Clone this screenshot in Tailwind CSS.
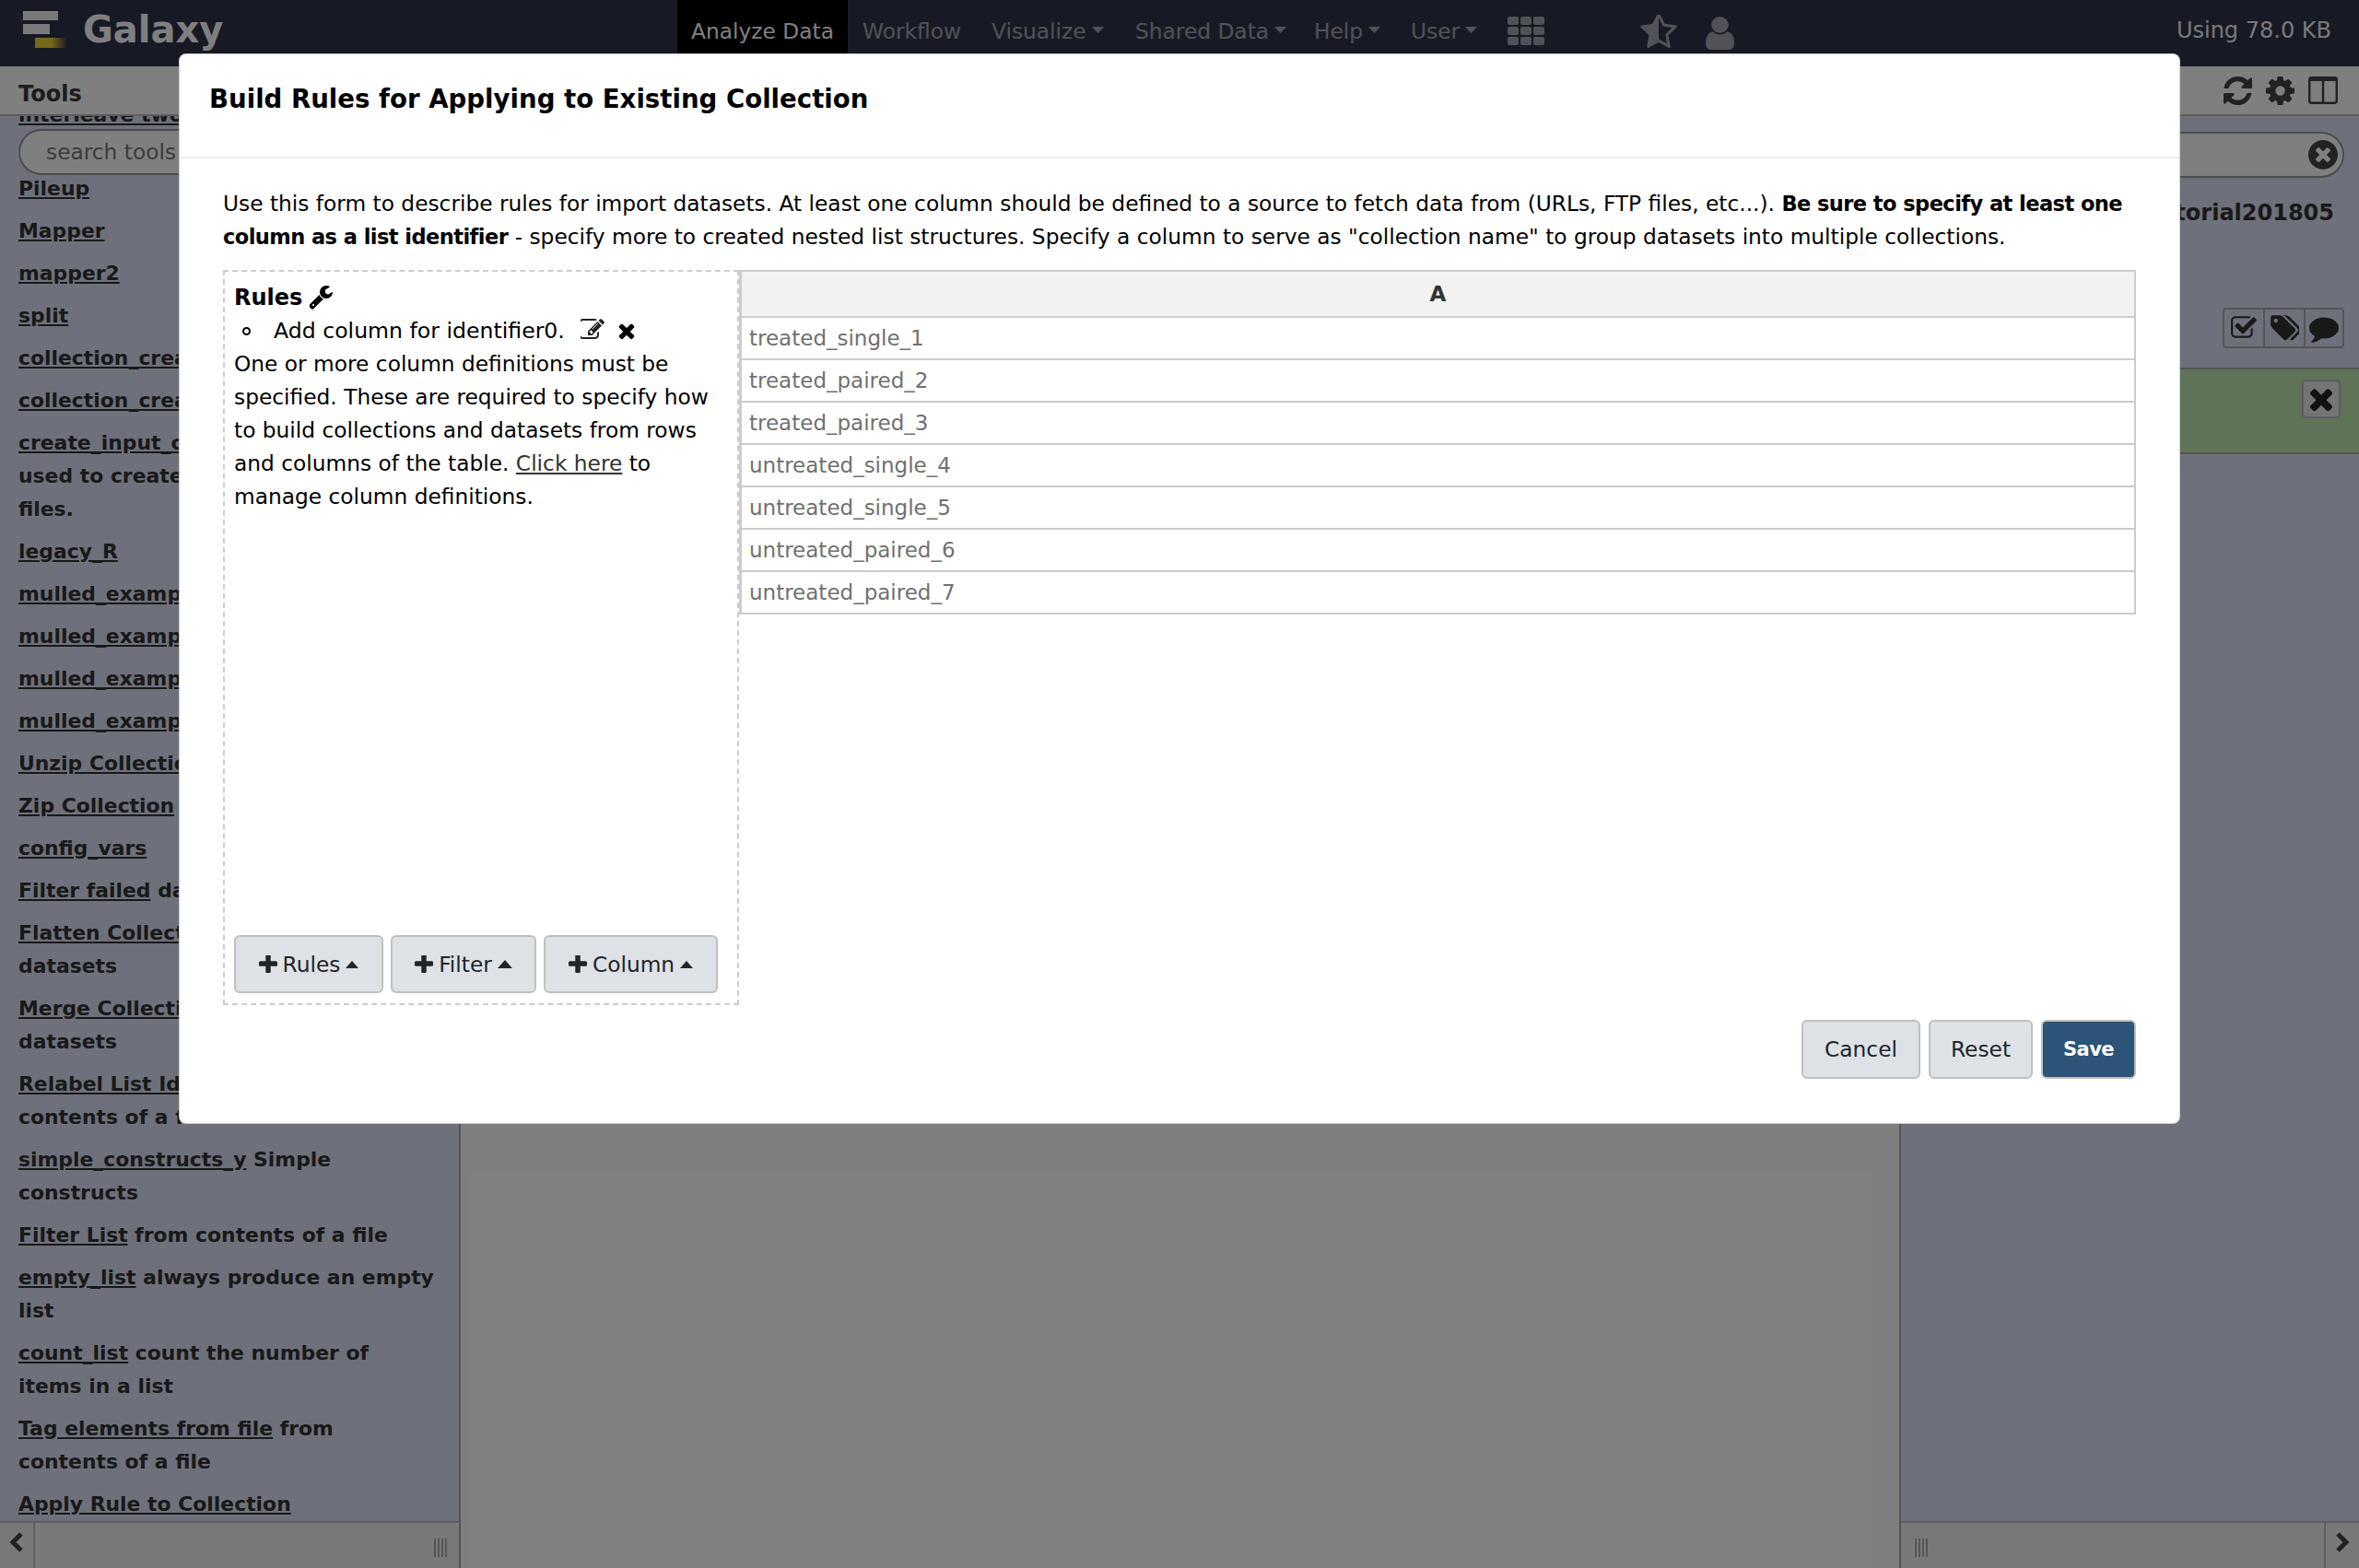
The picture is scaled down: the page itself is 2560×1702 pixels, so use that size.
<!DOCTYPE html>
<html>
<head>
<meta charset="utf-8">
<script src="https://cdn.jsdelivr.net/npm/@tailwindcss/browser@4"></script>
<title>Galaxy</title>
</head>
<body class="m-0 bg-white">
<div class="relative w-[2560px] h-[1702px] overflow-hidden flex flex-col font-['DejaVu_Sans',sans-serif] text-[23.3px] leading-[36px] text-[#2c3143] bg-white">

  <!-- Masthead -->
  <header class="h-[72px] shrink-0 bg-[#2e3448] flex items-start text-white/55">
    <div class="w-[735px] h-[64px] flex items-center pl-[25px] gap-[17px]">
      <div class="w-[48px] h-[40px] flex flex-col gap-[4px]">
        <div class="w-[38px] h-[10px] bg-white/95 blur-[0.7px]"></div>
        <div class="w-[29px] h-[11px] bg-white/95 blur-[0.7px]"></div>
        <div class="ml-[13px] w-[35px] h-[11px] bg-gradient-to-r from-[#f0d030] via-[#f0d030] to-transparent blur-[0.7px]"></div>
      </div>
      <span class="text-[40px] font-bold text-white leading-[64px]">Galaxy</span>
    </div>
    <nav class="flex h-[72px] items-start">
      <a class="w-[185px] h-[72px] bg-[#000] text-white pt-[16px] text-center leading-[36px]">Analyze Data</a>
      <a class="ml-[16px] w-[124px] pt-[16px]">Workflow</a>
      <a class="ml-[16px] w-[140px] pt-[16px] flex gap-[6px] items-start">Visualize<svg class="mt-[13px]" width="13" height="7"><polygon points="0,0 13,0 6.5,7" fill="currentColor"/></svg></a>
      <a class="ml-[16px] w-[178px] pt-[16px] flex gap-[6px] items-start">Shared Data<svg class="mt-[13px]" width="13" height="7"><polygon points="0,0 13,0 6.5,7" fill="currentColor"/></svg></a>
      <a class="ml-[16px] w-[89px] pt-[16px] flex gap-[6px] items-start">Help<svg class="mt-[13px]" width="13" height="7"><polygon points="0,0 13,0 6.5,7" fill="currentColor"/></svg></a>
      <a class="ml-[16px] w-[89px] pt-[16px] flex gap-[6px] items-start">User<svg class="mt-[13px]" width="13" height="7"><polygon points="0,0 13,0 6.5,7" fill="currentColor"/></svg></a>
      <div class="ml-[16px] mt-[18px] grid grid-cols-3 gap-[2px]">
        <i class="block w-[12px] h-[9px] rounded-[2px] bg-current"></i><i class="block w-[12px] h-[9px] rounded-[2px] bg-current"></i><i class="block w-[12px] h-[9px] rounded-[2px] bg-current"></i>
        <i class="block w-[12px] h-[9px] rounded-[2px] bg-current"></i><i class="block w-[12px] h-[9px] rounded-[2px] bg-current"></i><i class="block w-[12px] h-[9px] rounded-[2px] bg-current"></i>
        <i class="block w-[12px] h-[9px] rounded-[2px] bg-current"></i><i class="block w-[12px] h-[9px] rounded-[2px] bg-current"></i><i class="block w-[12px] h-[9px] rounded-[2px] bg-current"></i>
      </div>
      <svg class="ml-[104px] mt-[16px]" width="40" height="37" viewBox="64 128 1664 1536" preserveAspectRatio="none" fill="currentColor"><path d="M1250 957l257-250-356-52-66-10-30-60-159-322v963l59 31 318 168-60-355-12-66zm452-262l-363 354 86 500q5 33-6 51.5t-34 18.5q-17 0-40-12l-449-236-449 236q-23 12-40 12-23 0-34-18.5t-6-51.5l86-500-364-354q-32-32-23-59.5t54-34.5l502-73 225-455q20-41 49-41 28 0 49 41l225 455 502 73q45 7 54 34.5t-24 59.5z"/></svg>
      <svg class="ml-[31px] mt-[18px]" width="31" height="36" viewBox="256 128 1280 1536" preserveAspectRatio="none" fill="currentColor"><path d="M1536 1399q0 109-62.5 187t-150.5 78h-854q-88 0-150.5-78t-62.5-187q0-85 8.5-160.5t31.5-152 58.5-131 94-89 134.5-34.5q131 128 313 128t313-128q76 0 134.5 34.5t94 89 58.5 131 31.5 152 8.5 160.5zm-256-887q0 159-112.5 271.5t-271.5 112.5-271.5-112.5-112.5-271.5 112.5-271.5 271.5-112.5 271.5 112.5 112.5 271.5z"/></svg>
    </nav>
    <div class="ml-auto pr-[30px] pt-[15px] whitespace-nowrap text-[24px] text-white/95">Using 78.0 KB</div>
  </header>

  <!-- Panels -->
  <main class="flex-1 flex min-h-0 isolate">
    <!-- Tools -->
    <aside class="relative w-[500px] shrink-0 flex flex-col bg-[#dce2f6] border-r-[2px] border-[#aaa]">
      <div class="h-[54px] shrink-0 bg-[#ffffff] border-b-[2px] border-[#bbb] pl-[20px] pt-[12px] z-10 text-[#3a3a3a] font-bold text-[24px]">Tools</div>
      <div class="absolute left-[20px] top-[68px] w-[460px] h-[50px] rounded-full border-[2px] border-[#999] bg-white pl-[28px] leading-[46px] text-[#777] z-10">search tools</div>
      <div class="flex-1 overflow-hidden pl-[20px] flex flex-col gap-[10px] text-[#333] font-bold text-[21.9px]">
        <div class="h-[16px] -mt-[9px] leading-[16px] underline">interleave two</div>
        <div class="mt-[44px] underline">Pileup</div>
        <div class="underline">Mapper</div>
        <div class="underline">mapper2</div>
        <div class="underline">split</div>
        <div class="underline">collection_create</div>
        <div class="underline">collection_create</div>
        <div><span class="underline">create_input_collection</span><br>used to create a list of<br>files.</div>
        <div class="underline">legacy_R</div>
        <div class="underline">mulled_example</div>
        <div class="underline">mulled_example</div>
        <div class="underline">mulled_example</div>
        <div class="underline">mulled_example</div>
        <div class="underline">Unzip Collection</div>
        <div class="underline">Zip Collection</div>
        <div class="underline">config_vars</div>
        <div><span class="underline">Filter failed</span> datasets</div>
        <div><span class="underline">Flatten Collection</span><br>datasets</div>
        <div><span class="underline">Merge Collections</span><br>datasets</div>
        <div><span class="underline">Relabel List Identifiers</span><br>contents of a file</div>
        <div><span class="underline">simple_constructs_y</span> Simple<br>constructs</div>
        <div><span class="underline">Filter List</span> from contents of a file</div>
        <div><span class="underline">empty_list</span> always produce an empty<br>list</div>
        <div><span class="underline">count_list</span> count the number of<br>items in a list</div>
        <div><span class="underline">Tag elements from file</span> from<br>contents of a file</div>
        <div class="underline">Apply Rule to Collection</div>
      </div>
      <div class="h-[51px] shrink-0 bg-[#f2f2f2] border-t-[2px] border-[#bbb] flex z-10">
        <div class="w-[38px] border-r-[2px] border-[#bbb] flex items-start justify-center pt-[9px]">
          <svg width="16" height="24" viewBox="0 0 16 24" fill="none" stroke="#444" stroke-width="5"><path d="M13 3 L4 12 L13 21"/></svg>
        </div>
        <div class="ml-auto mr-[11px] mt-[17px] w-[16px] h-[20px] bg-[repeating-linear-gradient(90deg,#aaa_0,#aaa_2px,transparent_2px,transparent_4px)]"></div>
      </div>
    </aside>

    <!-- Center -->
    <section class="flex-1 bg-white"></section>

    <!-- History -->
    <aside class="relative w-[499px] shrink-0 flex flex-col bg-[#dce2f6] border-l-[2px] border-[#aaa]">
      <div class="h-[54px] shrink-0 bg-[#ffffff] border-b-[2px] border-[#bbb] flex justify-end items-center gap-[15px] pr-[23px] text-[#444]">
        <svg width="31" height="31" viewBox="128 128 1536 1536" fill="currentColor"><path d="M1639 1056q0 5-1 7-64 268-268 434.5t-478 166.5q-146 0-282.5-55t-243.5-157l-129 129q-19 19-45 19t-45-19-19-45v-448q0-26 19-45t45-19h448q26 0 45 19t19 45-19 45l-137 137q71 66 161 102t187 36q134 0 250-65t186-179q11-17 53-117 8-23 30-23h192q13 0 22.5 9.5t9.5 22.5zm25-800v448q0 26-19 45t-45 19h-448q-26 0-45-19t-19-45 19-45l138-138q-148-137-349-137-134 0-250 65t-186 179q-11 17-53 117-8 23-30 23h-199q-13 0-22.5-9.5t-9.5-22.5v-7q65-268 270-434.5t480-166.5q146 0 284 55.5t245 156.5l130-129q19-19 45-19t45 19 19 45z"/></svg>
        <svg width="31" height="31" viewBox="128 128 1536 1536" fill="currentColor"><path d="M1152 896q0-106-75-181t-181-75-181 75-75 181 75 181 181 75 181-75 75-181zm512-109v222q0 12-8 23t-20 13l-185 28q-19 54-39 91 35 50 107 138 10 12 10 25t-9 23q-27 37-99 108t-94 71q-12 0-26-9l-138-108q-44 23-91 38-16 136-29 186-7 28-36 28h-222q-14 0-24.5-8.5t-11.5-21.5l-28-184q-49-16-90-37l-141 107q-10 9-25 9-14 0-25-11-126-114-165-168-7-10-7-23 0-12 8-23 15-21 51-66.5t54-70.5q-27-50-41-99l-183-27q-13-2-21-12.5t-8-23.5v-222q0-12 8-23t19-13l186-28q14-46 39-92-40-57-107-138-10-12-10-24 0-10 9-23 26-36 98.5-107.5t94.5-71.5q13 0 26 10l138 107q44-23 91-38 16-136 29-186 7-28 36-28h222q14 0 24.5 8.5t11.5 21.5l28 184q49 16 90 37l142-107q9-9 24-9 13 0 25 10 129 119 165 170 7 8 7 22 0 12-8 23-15 21-51 66.5t-54 70.5q26 50 41 98l183 28q13 2 21 12.5t8 23.5z"/></svg>
        <svg width="32" height="30" viewBox="64 128 1664 1536" preserveAspectRatio="none" fill="currentColor"><path d="M224 1536h608v-1152h-640v1120q0 13 9.5 22.5t22.5 9.5zm1376-32v-1120h-640v1152h608q13 0 22.5-9.5t9.5-22.5zm128-1216v1216q0 66-47 113t-113 47h-1344q-66 0-113-47t-47-113v-1216q0-66 47-113t113-47h1344q66 0 113 47t47 113z"/></svg>
      </div>
      <div class="flex-1 min-h-0 flex flex-col">
        <div class="mt-[17px] mr-[16px] ml-[10px] h-[50px] rounded-full border-[2px] border-[#999] bg-white flex items-center justify-end pr-[5px]">
          <svg width="32" height="32" viewBox="128 128 1536 1536" fill="#444"><path d="M1277 1122q0-26-19-45l-181-181 181-181q19-19 19-45 0-27-19-46l-90-90q-19-19-46-19-26 0-45 19l-181 181-181-181q-19-19-45-19-27 0-46 19l-90 90q-19 19-19 46 0 26 19 45l181 181-181 181q-19 19-19 45 0 27 19 46l90 90q19 19 46 19 26 0 45-19l181-181 181 181q19 19 45 19 27 0 46-19l90-90q19-19 19-46zm387-226q0 209-103 385.5t-279.5 279.5-385.5 103-385.5-103-279.5-279.5-103-385.5 103-385.5 279.5-279.5 385.5-103 385.5 103 279.5 279.5 103 385.5z"/></svg>
        </div>
        <div class="mt-[20px] pr-[27px] text-right text-[#333] whitespace-nowrap text-[24px] font-bold">tutorial201805</div>
        <div class="mt-[85px] mr-[16px] self-end flex h-[44px] rounded-[4px] border-[2px] border-[#aaa] text-[#333]">
          <div class="w-[44px] flex items-center justify-center border-r-[2px] border-[#aaa]"><svg width="30" height="30" viewBox="0 0 1792 1792" fill="currentColor"><path d="M1472 930v318q0 119-84.5 203.5t-203.5 84.5h-832q-119 0-203.5-84.5t-84.5-203.5v-832q0-119 84.5-203.5t203.5-84.5h832q63 0 117 25 15 7 18 23 3 17-9 29l-49 49q-10 10-23 10-3 0-9-2-23-6-45-6h-832q-66 0-113 47t-47 113v832q0 66 47 113t113 47h832q66 0 113-47t47-113v-254q0-13 9-22l64-64q10-10 23-10 6 0 12 3 20 8 20 29zm231-489l-814 814q-24 24-57 24t-57-24l-430-430q-24-24-24-57t24-57l110-110q24-24 57-24t57 24l263 263 647-647q24-24 57-24t57 24l110 110q24 24 24 57t-24 57z"/></svg></div>
          <div class="w-[44px] flex items-center justify-center border-r-[2px] border-[#aaa]"><svg width="32" height="32" viewBox="0 0 1792 1792" fill="currentColor"><path d="M512 448q0-53-37.5-90.5t-90.5-37.5-90.5 37.5-37.5 90.5 37.5 90.5 90.5 37.5 90.5-37.5 37.5-90.5zm1067 576q0 53-37 90l-491 492q-39 37-91 37-53 0-90-37l-715-716q-38-37-64.5-101t-26.5-117v-416q0-52 38-90t90-38h416q53 0 117 26.5t102 64.5l715 714q37 39 37 91zm384 0q0 53-37 90l-491 492q-39 37-91 37-36 0-59-14t-53-45l470-470q37-37 37-90 0-52-37-91l-715-714q-38-38-102-64.5t-117-26.5h224q53 0 117 26.5t102 64.5l715 714q37 39 37 91z"/></svg></div>
          <div class="w-[40px] flex items-center justify-center"><svg width="32" height="32" viewBox="0 0 1792 1792" fill="currentColor"><path d="M1792 896q0 174-120 321.5t-326 233-450 85.5q-70 0-145-8-198 175-460 242-49 14-114 22-17 2-30.5-9t-17.5-29v-1q-3-4-.5-12t2-10 4.5-9.5l6-9 7-8.5 8-9q7-8 31-34.5t34.5-38 31-39.5 32.5-51 27-59 26-76q-157-89-247.5-220t-90.5-281q0-130 71-248.5t191-204.5 286-136.5 348-50.5q244 0 450 85.5t326 233 120 321.5z"/></svg></div>
        </div>
        <div class="mt-[21px] h-[94px] bg-[#bce6b0] border-y-[2px] border-[#aaa] flex justify-end items-start pr-[20px] pt-[11px]">
          <div class="w-[42px] h-[42px] rounded-[4px] border-[2px] border-[#bbb] bg-[#e8e8e8] flex items-center justify-center"><svg width="26" height="26" viewBox="256 256 1280 1280" fill="#222"><path d="M1490 1322q0 40-28 68l-136 136q-28 28-68 28t-68-28l-294-294-294 294q-28 28-68 28t-68-28l-136-136q-28-28-28-68t28-68l294-294-294-294q-28-28-28-68t28-68l136-136q28-28 68-28t68 28l294 294 294-294q28-28 68-28t68 28l136 136q28 28 28 68t-28 68l-294 294 294 294q28 28 28 68z"/></svg></div>
        </div>
      </div>
      <div class="h-[51px] shrink-0 bg-[#f2f2f2] border-t-[2px] border-[#bbb] flex">
        <div class="ml-[15px] mt-[17px] w-[16px] h-[20px] bg-[repeating-linear-gradient(90deg,#aaa_0,#aaa_2px,transparent_2px,transparent_4px)]"></div>
        <div class="ml-auto w-[38px] border-l-[2px] border-[#bbb] flex items-start justify-center pt-[9px]">
          <svg width="16" height="24" viewBox="0 0 16 24" fill="none" stroke="#444" stroke-width="5"><path d="M3 3 L12 12 L3 21"/></svg>
        </div>
      </div>
    </aside>
  </main>

  <!-- Backdrop -->
  <div class="absolute inset-0 bg-black/50"></div>

  <!-- Modal -->
  <div class="absolute left-[194px] top-[58px] w-[2172px] h-[1162px] bg-white rounded-[8px] flex flex-col text-[#000] border-[1px] border-black/20">
    <div class="h-[113px] shrink-0 border-b-[2px] border-[#e9ecef] pl-[32px] pt-[30px]">
      <h4 class="text-[27.6px] leading-[38px] font-bold">Build Rules for Applying to Existing Collection</h4>
    </div>
    <div class="flex-1 px-[47px] pt-[31px] flex flex-col">
      <p>Use this form to describe rules for import datasets. At least one column should be defined to a source to fetch data from (URLs, FTP files, etc...). <b class="text-[22.5px] tracking-[-0.55px]">Be sure to specify at least one column as a list identifier</b> - specify more to created nested list structures. Specify a column to serve as "collection name" to group datasets into multiple collections.</p>
      <div class="mt-[18px] flex items-start">
        <div class="w-[560px] h-[798px] shrink-0 border-[2px] border-dashed border-[#ccc] flex flex-col px-[10px] pt-[10px] pb-[11px]">
          <div class="font-bold text-[24px] flex items-center gap-[8px]">Rules
            <svg width="26" height="26" viewBox="128 128 1664 1664" fill="#000"><path d="M448 1472q0-26-19-45t-45-19-45 19-19 45 19 45 45 19 45-19 19-45zm644-420l-682 682q-37 37-90 37-52 0-91-37l-106-108q-38-36-38-90 0-53 38-91l681-681q39 98 114.5 173.5t173.5 114.5zm634-435q0 39-23 106-47 134-164.5 217.5t-258.5 83.5q-185 0-316.5-131.5t-131.5-316.5 131.5-316.5 316.5-131.5q58 0 121.5 16.5t107.5 46.5q16 11 16 28t-16 28l-293 169v224l193 107q5-3 79-48.5t135.5-81 70.5-35.5q15 0 23.5 10t8.5 25z"/></svg>
          </div>
          <div class="flex items-center pl-[9px]">
            <span class="block w-[9px] h-[9px] rounded-full border-[2px] border-black"></span>
            <span class="ml-[25px] text-[23.6px]">Add column for identifier0.</span>
            <svg class="ml-[17px]" width="26" height="26" viewBox="128 128 1664 1664" fill="#222"><path d="M888 1184l116-116-152-152-116 116v56h96v96h56zm440-720q-16-16-33 1l-350 350q-17 17-1 33t33-1l350-350q17-17 1-33zm80 594v190q0 119-84.5 203.5t-203.5 84.5h-832q-119 0-203.5-84.5t-84.5-203.5v-832q0-119 84.5-203.5t203.5-84.5h832q63 0 117 25 15 7 18 23 3 17-9 29l-49 49q-14 14-32 8-23-6-45-6h-832q-66 0-113 47t-47 113v832q0 66 47 113t113 47h832q66 0 113-47t47-113v-126q0-13 9-22l64-64q15-15 35-7t20 29zm-96-738l288 288-672 672h-288v-288zm444 132l-92 92-288-288 92-92q28-28 68-28t68 28l152 152q28 28 28 68t-28 68z"/></svg>
            <svg class="ml-[15px]" width="18" height="18" viewBox="256 256 1280 1280" fill="#000"><path d="M1490 1322q0 40-28 68l-136 136q-28 28-68 28t-68-28l-294-294-294 294q-28 28-68 28t-68-28l-136-136q-28-28-28-68t28-68l294-294-294-294q-28-28-28-68t28-68l136-136q28-28 68-28t68 28l294 294 294-294q28-28 68-28t68 28l136 136q28 28 28 68t-28 68l-294 294 294 294q28 28 28 68z"/></svg>
          </div>
          <p>One or more column definitions must be specified. These are required to specify how to build collections and datasets from rows and columns of the table. <a class="underline text-[#333]">Click here</a> to manage column definitions.</p>
          <div class="mt-auto flex gap-[8px] text-[#212529]">
            <button class="w-[162px] h-[63px] rounded-[6px] border-[2px] border-[#bfbfbf] bg-[#dee2e6] flex items-center justify-center gap-[6px]"><svg width="20" height="20" viewBox="192 192 1408 1408" fill="currentColor"><path d="M1600 736v192q0 40-28 68t-68 28h-416v416q0 40-28 68t-68 28h-192q-40 0-68-28t-28-68v-416h-416q-40 0-68-28t-28-68v-192q0-40 28-68t68-28h416v-416q0-40 28-68t68-28h192q40 0 68 28t28 68v416h416q40 0 68 28t28 68z"/></svg>Rules<svg width="14" height="8"><polygon points="0,8 14,8 7,0" fill="currentColor"/></svg></button>
            <button class="w-[158px] h-[63px] rounded-[6px] border-[2px] border-[#bfbfbf] bg-[#dee2e6] flex items-center justify-center gap-[6px]"><svg width="20" height="20" viewBox="192 192 1408 1408" fill="currentColor"><path d="M1600 736v192q0 40-28 68t-68 28h-416v416q0 40-28 68t-68 28h-192q-40 0-68-28t-28-68v-416h-416q-40 0-68-28t-28-68v-192q0-40 28-68t68-28h416v-416q0-40 28-68t68-28h192q40 0 68 28t28 68v416h416q40 0 68 28t28 68z"/></svg>Filter<svg width="16" height="9"><polygon points="0,9 16,9 8,0" fill="currentColor"/></svg></button>
            <button class="w-[189px] h-[63px] rounded-[6px] border-[2px] border-[#bfbfbf] bg-[#dee2e6] flex items-center justify-center gap-[6px]"><svg width="20" height="20" viewBox="192 192 1408 1408" fill="currentColor"><path d="M1600 736v192q0 40-28 68t-68 28h-416v416q0 40-28 68t-68 28h-192q-40 0-68-28t-28-68v-416h-416q-40 0-68-28t-28-68v-192q0-40 28-68t68-28h416v-416q0-40 28-68t68-28h192q40 0 68 28t28 68v416h416q40 0 68 28t28 68z"/></svg>Column<svg width="14" height="8"><polygon points="0,8 14,8 7,0" fill="currentColor"/></svg></button>
          </div>
        </div>
        <div class="flex-1 flex flex-col border-[2px] border-[#ccc] border-l-[3px] text-[#707070] text-[23px]">
          <div class="h-[50px] bg-[#f2f2f2] border-b-[2px] border-[#ccc] text-center font-bold text-[#333] leading-[48px]">A</div>
          <div class="h-[46px] border-b-[2px] border-[#ccc] pl-[8px] leading-[44px]">treated_single_1</div>
          <div class="h-[46px] border-b-[2px] border-[#ccc] pl-[8px] leading-[44px]">treated_paired_2</div>
          <div class="h-[46px] border-b-[2px] border-[#ccc] pl-[8px] leading-[44px]">treated_paired_3</div>
          <div class="h-[46px] border-b-[2px] border-[#ccc] pl-[8px] leading-[44px]">untreated_single_4</div>
          <div class="h-[46px] border-b-[2px] border-[#ccc] pl-[8px] leading-[44px]">untreated_single_5</div>
          <div class="h-[46px] border-b-[2px] border-[#ccc] pl-[8px] leading-[44px]">untreated_paired_6</div>
          <div class="h-[44px] pl-[8px] leading-[44px]">untreated_paired_7</div>
        </div>
      </div>
      <div class="mt-[16px] flex justify-end gap-[9px] text-[#212529]">
        <button class="w-[129px] h-[64px] rounded-[6px] border-[2px] border-[#bfbfbf] bg-[#dee2e6]">Cancel</button>
        <button class="w-[113px] h-[64px] rounded-[6px] border-[2px] border-[#bfbfbf] bg-[#dee2e6]">Reset</button>
        <button class="w-[103px] h-[64px] rounded-[6px] border-[2px] border-[#bfbfbf] bg-[#2c5378] text-white font-bold text-[21px] tracking-[-0.6px]">Save</button>
      </div>
    </div>
  </div>
</div>
</body>
</html>
